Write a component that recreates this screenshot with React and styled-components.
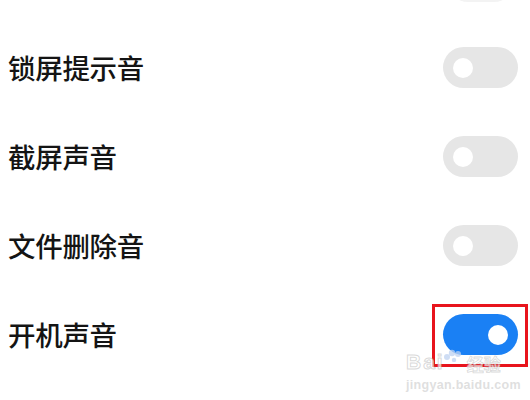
import React, { useState } from "react";
import styled, { createGlobalStyle } from "styled-components";

const GlobalStyle = createGlobalStyle`
  html, body {
    margin: 0;
    padding: 0;
    background: #fff;
  }
  body {
    font-family: "Noto Sans CJK SC", "Noto Sans", sans-serif;
  }
`;

const items = [
  { id: 1, label: "锁屏提示音", on: false },
  { id: 2, label: "截屏声音", on: false },
  { id: 3, label: "文件删除音", on: false },
  { id: 4, label: "开机声音", on: true, marked: true },
];

export default function App() {
  const [list, setList] = useState(items);

  const toggle = (id) => {
    setList(list.map((el) => (el.id === id ? { ...el, on: !el.on } : el)));
  };

  return (
    <Page>
      <GlobalStyle />
      <TopEdge />
      <List>
        {list.map((el) => (
          <Row key={el.id}>
            <Label>{el.label}</Label>
            <SwitchWrap>
              <Switch $on={el.on} onClick={() => toggle(el.id)}>
                <Knob $on={el.on} />
              </Switch>
              {el.marked && <Marker />}
            </SwitchWrap>
          </Row>
        ))}
      </List>
      <Watermark>
        <Brand>
          <BrandLatin>Bai</BrandLatin>
          <Paw viewBox="0 0 20 14">
            <circle cx="4" cy="9" r="3" />
            <circle cx="9" cy="5" r="3.2" />
            <circle cx="15" cy="6" r="3" />
            <circle cx="11" cy="12" r="2.2" />
          </Paw>
          <BrandCjk>经验</BrandCjk>
        </Brand>
        <Site>jingyan.baidu.com</Site>
      </Watermark>
    </Page>
  );
}

const Page = styled.div`
  position: relative;
  width: 530px;
  height: 400px;
  overflow: hidden;
  background: #fff;
`;

const TopEdge = styled.div`
  position: absolute;
  top: -38px;
  left: 448px;
  width: 66px;
  height: 40px;
  border-radius: 20px;
  background: #f3f3f3;
`;

const List = styled.div`
  display: flex;
  flex-direction: column;
  padding-top: 23px;
`;

const Row = styled.div`
  display: flex;
  align-items: center;
  justify-content: space-between;
  height: 89px;
  padding: 0 12px 0 8px;
`;

const Label = styled.span`
  font-size: 27.5px;
  font-weight: 500;
  color: #141414;
  line-height: 1;
  letter-spacing: -0.3px;
`;

const SwitchWrap = styled.div`
  position: relative;
  display: flex;
`;

const Switch = styled.button`
  display: flex;
  align-items: center;
  justify-content: ${(p) => (p.$on ? "flex-end" : "flex-start")};
  width: 75px;
  height: 41px;
  padding: 0 10px;
  border: none;
  border-radius: 21px;
  background: ${(p) => (p.$on ? "#1a80f4" : "#e6e6e6")};
  cursor: pointer;
`;

const Knob = styled.span`
  width: 20px;
  height: 20px;
  border-radius: 50%;
  background: #fff;
`;

const Marker = styled.div`
  position: absolute;
  left: -11px;
  top: -10px;
  width: 90px;
  height: 57px;
  border: 3px solid #e8141c;
`;

const Watermark = styled.div`
  position: absolute;
  left: 406px;
  top: 350px;
  display: flex;
  flex-direction: column;
  align-items: flex-start;
  pointer-events: none;
`;

const Brand = styled.div`
  position: relative;
  display: flex;
  align-items: flex-end;
  height: 22px;
  color: rgba(255, 255, 255, 0.7);
  -webkit-text-stroke: 1px rgba(185, 185, 185, 0.55);
`;

const BrandLatin = styled.span`
  font-family: "Liberation Sans", Arial, sans-serif;
  font-size: 21px;
  font-weight: 700;
  letter-spacing: 2px;
  line-height: 1;
`;

const Paw = styled.svg`
  width: 20px;
  height: 14px;
  margin: 0 2px 10px -2px;
  fill: rgba(190, 210, 240, 0.75);
`;

const BrandCjk = styled.span`
  margin-left: 2px;
  font-family: "Noto Sans CJK SC", sans-serif;
  font-size: 17px;
  font-weight: 700;
  line-height: 1;
  -webkit-text-stroke: 0.8px rgba(185, 185, 185, 0.55);
`;

const Site = styled.div`
  margin-top: 6px;
  font-family: "Liberation Sans", Arial, sans-serif;
  font-size: 12.5px;
  font-weight: 700;
  letter-spacing: 0.3px;
  color: rgba(215, 215, 215, 0.8);
`;
